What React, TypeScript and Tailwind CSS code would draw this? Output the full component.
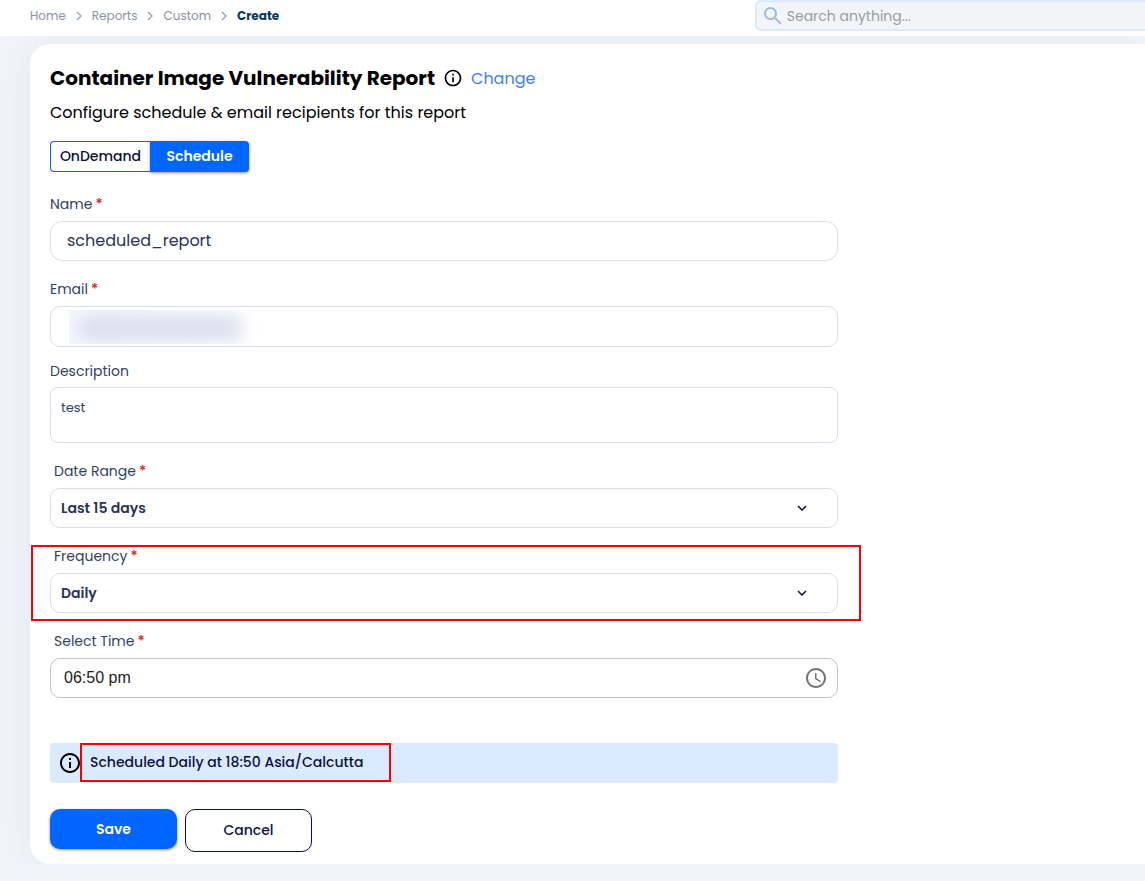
import React, { useState } from "react";

function InfoIcon({ className }: { className: string }) {
  return (
    <svg viewBox="0 0 24 24" className={className} fill="currentColor" aria-hidden="true">
      <path d="M11 7h2v2h-2zm0 4h2v6h-2zm1-9C6.48 2 2 6.48 2 12s4.48 10 10 10 10-4.48 10-10S17.52 2 12 2zm0 18c-4.41 0-8-3.59-8-8s3.59-8 8-8 8 3.59 8 8-3.59 8-8 8z" />
    </svg>
  );
}

function SearchIcon() {
  return (
    <svg viewBox="0 0 24 24" className="size-6 shrink-0 text-[#a3bdd6]" fill="currentColor" aria-hidden="true">
      <path d="M15.5 14h-.79l-.28-.27C15.41 12.59 16 11.11 16 9.5 16 5.91 13.09 3 9.5 3S3 5.91 3 9.5 5.91 16 9.5 16c1.61 0 3.09-.59 4.23-1.57l.27.28v.79l5 4.99L20.49 19l-4.99-5zm-6 0C7.01 14 5 11.99 5 9.5S7.01 5 9.5 5 14 7.01 14 9.5 11.99 14 9.5 14z" />
    </svg>
  );
}

function ClockIcon() {
  return (
    <svg viewBox="0 0 24 24" className="size-6" fill="currentColor" aria-hidden="true">
      <path d="M11.99 2C6.47 2 2 6.48 2 12s4.47 10 9.99 10C17.52 22 22 17.52 22 12S17.52 2 11.99 2zM12 20c-4.42 0-8-3.58-8-8s3.58-8 8-8 8 3.58 8 8-3.58 8-8 8zm.5-13H11v6l5.25 3.15.75-1.23-4.5-2.67z" />
    </svg>
  );
}

function Separator() {
  return (
    <svg viewBox="0 0 6 10" className="h-[10px] w-[6px]" fill="none" stroke="#8f9bb3" strokeWidth="1.2" aria-hidden="true">
      <path d="M1 1l4 4-4 4" />
    </svg>
  );
}

function Label({ htmlFor, children, required, indent }: { htmlFor: string; children: React.ReactNode; required?: boolean; indent?: boolean }) {
  return (
    <label htmlFor={htmlFor} className={`block text-sm leading-5 text-[#2f3f5f] ${indent ? "pl-1" : ""}`}>
      {children}
      {required && <span className="pl-[3px] font-semibold text-[#d93025]">*</span>}
    </label>
  );
}

function SelectField({ id, label, options }: { id: string; label: string; options: string[] }) {
  return (
    <div className="flex flex-col gap-[7px]">
      <Label htmlFor={id} required indent>{label}</Label>
      <div className="relative">
        <select id={id} className="h-10 w-full appearance-none rounded-[10px] border border-[#d8deeb] bg-white px-[10px] text-sm font-semibold text-[#2a3454]">
          {options.map((o) => <option key={o}>{o}</option>)}
        </select>
        <svg viewBox="0 0 10 6" className="pointer-events-none absolute top-[17px] right-[31px] h-[6px] w-[10px]" fill="none" stroke="#0a1142" strokeWidth="1.5" aria-hidden="true">
          <path d="M1 1l4 4 4-4" />
        </svg>
      </div>
    </div>
  );
}

export default function App() {
  const [name, setName] = useState("scheduled_report");
  const [description, setDescription] = useState("test");
  const [time, setTime] = useState("06:50 pm");
  return (
    <div className="min-h-screen bg-[#f1f5fa] pb-[17px] font-['Poppins','Inter',sans-serif] text-black">
      <header className="flex h-9 items-start justify-between bg-white pl-[30px]">
        <nav aria-label="Breadcrumb" className="pt-[6px]">
          <ol className="flex h-5 items-center gap-[10px] text-xs text-[#8b929c]">
            <li><a href="#home">Home</a></li>
            <li><Separator /></li>
            <li><a href="#reports">Reports</a></li>
            <li><Separator /></li>
            <li><a href="#custom">Custom</a></li>
            <li><Separator /></li>
            <li aria-current="page" className="font-bold text-[#063763]">Create</li>
          </ol>
        </nav>
        <div className="flex h-[31px] w-[35%] items-center gap-[2px] rounded-l-md border-2 border-r-0 border-[#dbeafe] bg-[#f1f5fa] pl-1">
          <SearchIcon />
          <input type="search" aria-label="Search" placeholder="Search anything..." className="min-w-0 flex-1 bg-transparent text-sm outline-none placeholder:text-[#999da3]" />
        </div>
      </header>

      <div className="overflow-hidden pt-2 pl-[30px]">
        <main className="rounded-l-[20px] bg-white px-5 pt-5 pb-3 shadow-[0_0_40px_#e2e6ef]">
          <div className="flex h-7 items-center gap-2">
            <h1 className="text-xl font-bold">Container Image Vulnerability Report</h1>
            <InfoIcon className="size-5" />
            <a href="#change" className="pt-[2px] text-base text-[#3b82f6]">Change</a>
          </div>
          <p className="mt-[9px] text-base leading-6">Configure schedule &amp; email recipients for this report</p>

          <div className="mt-4 flex h-[31px] w-[199px] text-sm font-medium">
            <button type="button" className="flex-1 rounded-l-[4px] border border-r-0 border-[#0066ff] pb-[2px] text-[#0a1142]">OnDemand</button>
            <button type="button" aria-pressed="true" className="flex-1 rounded-r-[4px] bg-[#0066ff] pb-[2px] font-semibold text-white shadow-[0_1px_3px_rgba(0,0,0,0.45)]">Schedule</button>
          </div>

          <form className="mt-[22px] flex max-w-[788px] flex-col" onSubmit={(e) => e.preventDefault()}>
            <div className="flex flex-col gap-[7px]">
              <Label htmlFor="name" required>Name</Label>
              <input id="name" value={name} onChange={(e) => setName(e.target.value)} className="h-10 rounded-[12px] border border-[#d8deeb] px-4 pb-[2px] text-base text-[#2a3454]" />
            </div>

            <div className="mt-[18px] flex flex-col gap-[7px]">
              <Label htmlFor="email" required>Email</Label>
              <div className="relative">
                <input id="email" type="email" className="block h-[41px] w-full rounded-[10px] border border-[#d8deeb] px-4 text-base" />
                <div className="pointer-events-none absolute top-1 left-[19px] h-[34px] w-[190px] overflow-hidden bg-linear-to-r from-[#f7f9fd] to-white">
                  <div className="mt-[6px] ml-2 h-6 w-[164px] rounded-lg bg-[#d8dcec] blur-[9px]" />
                </div>
              </div>
            </div>

            <div className="mt-[14px] flex flex-col gap-[6px]">
              <Label htmlFor="description">Description</Label>
              <textarea id="description" value={description} onChange={(e) => setDescription(e.target.value)} className="h-14 resize-none rounded-[8px] border border-[#d8deeb] px-[10px] py-[10px] text-[13px] leading-5 text-[#2f3f5f]" />
            </div>

            <div className="mt-[18px]">
              <SelectField id="range" label="Date Range" options={["Last 15 days", "Last 30 days"]} />
            </div>

            <div className="relative mt-[18px]">
              <SelectField id="frequency" label="Frequency" options={["Daily", "Weekly", "Monthly"]} />
              <div className="pointer-events-none absolute -top-px -right-[23px] -bottom-2 -left-[19px] border-2 border-[#ff0000]" />
            </div>

            <div className="mt-[18px] flex flex-col gap-[7px]">
              <Label htmlFor="time" required indent>Select Time</Label>
              <div className="flex h-10 items-center rounded-[10px] border border-[#c4c4c4] pr-[9px] pl-[13px]">
                <input id="time" value={time} onChange={(e) => setTime(e.target.value)} className="min-w-0 flex-1 font-['Liberation_Sans',sans-serif] text-base text-[#212121] outline-none" />
                <button type="button" aria-label="Choose time" className="text-[#757575]"><ClockIcon /></button>
              </div>
            </div>

            <div role="status" className="mt-[45px] flex h-10 items-center rounded-[4px] bg-[#dbeafe] pl-2">
              <InfoIcon className="size-6 shrink-0" />
              <div className="relative h-10 pr-6 pl-2 text-sm leading-[38px] font-medium text-[#0a1142]">
                Scheduled Daily at 18:50 Asia/Calcutta
                <div className="pointer-events-none absolute top-0 -left-[2px] h-[39px] w-[311px] border-2 border-[#ff0000]" />
              </div>
            </div>

            <div className="mt-[26px] flex items-start gap-2 text-sm">
              <button type="submit" className="h-10 w-[127px] rounded-[10px] bg-[#0066ff] font-semibold text-white shadow-[0_1px_3px_rgba(0,0,0,0.45)]">Save</button>
              <button type="button" className="h-[43px] w-[127px] rounded-[10px] border border-[#0a1142] pb-[2px] font-medium text-[#0a1142]">Cancel</button>
            </div>
          </form>
        </main>
      </div>
    </div>
  );
}
